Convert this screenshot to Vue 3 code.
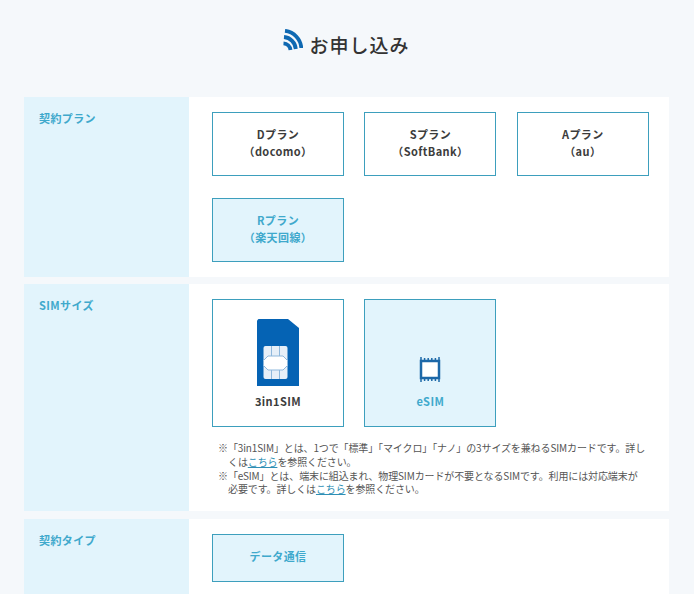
<template>
  <div class="page">
    <h1 class="title">
      <svg class="title-icon" viewBox="0 0 20 22" width="20" height="22">
        <path d="M2 1.800A18.500 18.500 0 0 1 18.300 19" />
        <path d="M1 8A13 13 0 0 1 12.800 20" />
        <path d="M0.500 14.300A7.500 7.500 0 0 1 7.500 21" />
      </svg>
      <span>お申し込み</span>
    </h1>

    <section class="row">
      <div class="row-label">契約プラン</div>
      <div class="row-body">
        <div class="options">
          <button v-for="plan in plans" :key="plan.name" class="option" :class="{ active: plan.active }">
            {{ plan.name }}<br />{{ plan.sub }}
          </button>
        </div>
      </div>
    </section>

    <section class="row">
      <div class="row-label">SIMサイズ</div>
      <div class="row-body">
        <div class="options">
          <button class="option sim">
            <svg class="sim-icon" viewBox="0 0 42 67" width="42" height="67">
              <path class="sim-body" d="M1.500 0H31L42 9V67H0V1.500Z" />
              <rect class="sim-chip" x="6.500" y="27" width="24" height="33" rx="2" />
              <path class="sim-line" d="M14.500 27V60M22.500 27V60" />
              <path class="sim-core" d="M11 37H26L30.500 41.500V46.500L26 51H11L6.500 46.500V41.500Z" />
            </svg>
            <span>3in1SIM</span>
          </button>
          <button class="option sim active">
            <svg class="esim-icon" viewBox="0 0 22 25" width="22" height="25">
              <path class="esim-pins" d="M2 0V25M5.600 1V24M9.200 1V24M12.800 1V24M16.400 1V24M20 0V25" />
              <rect class="esim-frame" x="2" y="4" width="18" height="17" />
            </svg>
            <span>eSIM</span>
          </button>
        </div>
        <ul class="notes">
          <li>※「3in1SIM」とは、1つで「標準」「マイクロ」「ナノ」の3サイズを兼ねるSIMカードです。詳しくは<a href="#">こちら</a>を参照ください。</li>
          <li>※「eSIM」とは、端末に組込まれ、物理SIMカードが不要となるSIMです。利用には対応端末が<br />必要です。詳しくは<a href="#">こちら</a>を参照ください。</li>
        </ul>
      </div>
    </section>

    <section class="row">
      <div class="row-label">契約タイプ</div>
      <div class="row-body">
        <div class="options">
          <button class="option short active">データ通信</button>
        </div>
      </div>
    </section>
  </div>
</template>

<script setup>
const plans = [
  { name: 'Dプラン', sub: '（docomo）' },
  { name: 'Sプラン', sub: '（SoftBank）' },
  { name: 'Aプラン', sub: '（au）' },
  { name: 'Rプラン', sub: '（楽天回線）', active: true },
]
</script>

<style>
html,
body {
  background: #f5f8fb;
  overflow: hidden;
}
</style>

<style scoped>
.page {
  height: 594px;
  padding: 0 25px 0 24px;
  overflow: hidden;
  font-family: "Noto Sans CJK JP", "Liberation Sans", sans-serif;
  color: #333;
}

.title {
  display: flex;
  justify-content: center;
  align-items: center;
  gap: 6px;
  height: 97px;
  margin: 0;
  padding: 0 0 8px;
  box-sizing: border-box;
  font-size: 19px;
  font-weight: 500;
  letter-spacing: 1px;
}

.title-icon {
  margin-top: -9px;
  fill: none;
  stroke: #0f69b2;
  stroke-width: 3.800;
}

.row {
  display: flex;
  margin-bottom: 7.500px;
  background: #fff;
}

.row-label {
  flex: 0 0 165px;
  box-sizing: border-box;
  padding: 13px 15px;
  background: #e2f4fc;
  color: #3fa9cc;
  font-size: 11px;
  font-weight: 700;
  line-height: 16px;
  letter-spacing: 0.400px;
}

.row-body {
  flex: 1;
  padding: 15px 20px 15px 23px;
}

.options {
  display: flex;
  flex-wrap: wrap;
  gap: 21.500px 20.400px;
}

.option {
  display: block;
  box-sizing: border-box;
  width: 132px;
  height: 64px;
  padding: 0 0 2px;
  border: 1px solid #3d9fbd;
  border-radius: 0;
  background: #fff;
  color: #3c3c3c;
  font-family: inherit;
  font-size: 11px;
  font-weight: 700;
  line-height: 17px;
  letter-spacing: 0.400px;
}

.option.active {
  background: #e2f4fc;
  color: #3fa9cc;
}

.option.sim {
  display: flex;
  flex-direction: column;
  align-items: center;
  justify-content: flex-end;
  height: 128px;
  padding-bottom: 16px;
}

.option.short {
  height: 48px;
}

.sim-icon {
  margin-bottom: 7px;
}

.esim-icon {
  margin-bottom: 11px;
}

.sim-body {
  fill: #0563b4;
}

.sim-chip {
  fill: #e6eff8;
}

.sim-line {
  fill: none;
  stroke: #8fb8dc;
  stroke-width: 1;
}

.sim-core {
  fill: #fff;
  stroke: #8fb8dc;
  stroke-width: 1;
  stroke-linejoin: round;
}

.esim-pins {
  fill: none;
  stroke: #1c68a8;
  stroke-width: 1.500;
}

.esim-frame {
  fill: #fff;
  stroke: #1c68a8;
  stroke-width: 2.500;
}

.notes {
  margin: 14px 0 0;
  padding: 0 2px 0 6px;
  list-style: none;
  color: #555;
  font-size: 10px;
  font-weight: 400;
  line-height: 13.750px;
  letter-spacing: -0.120px;
}

.notes li {
  padding-left: 10px;
  text-indent: -10px;
}

.notes a {
  color: #2f8fb5;
}
</style>
